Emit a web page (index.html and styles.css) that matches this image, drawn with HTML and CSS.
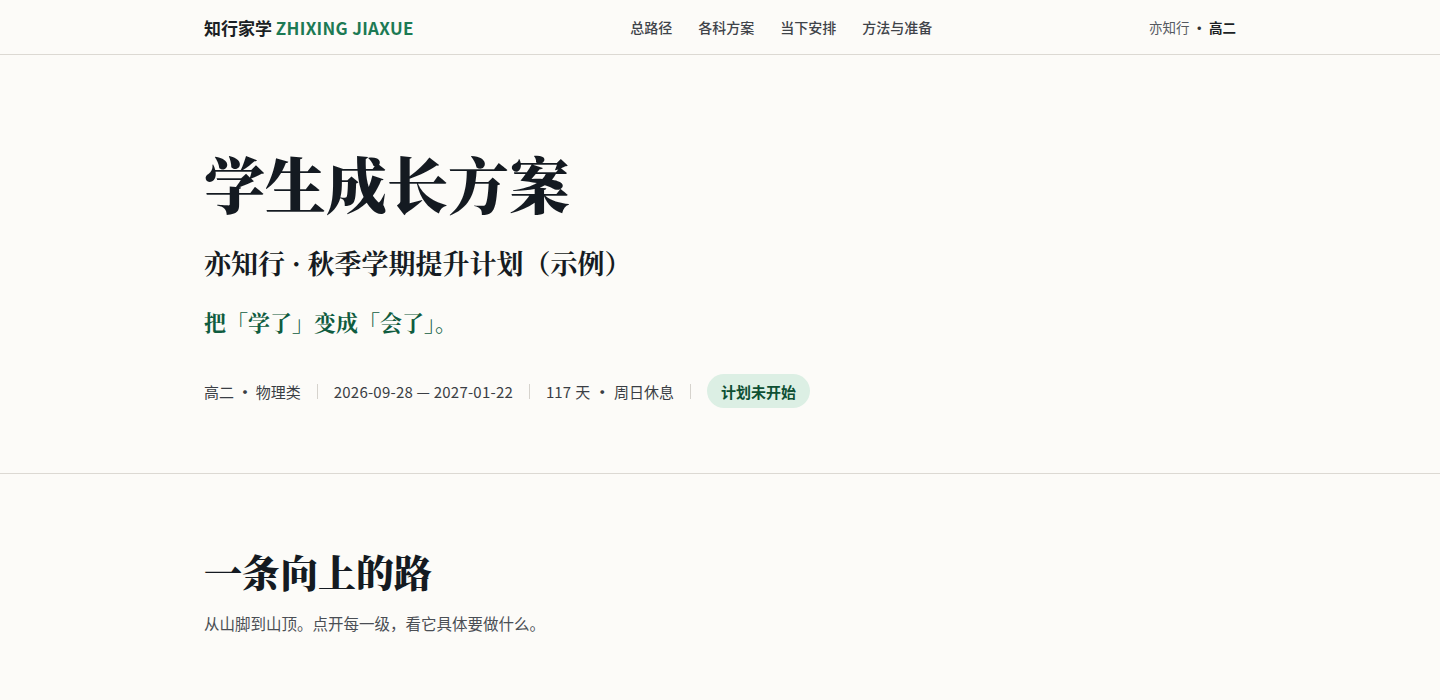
FILE: index.html
```html
<!DOCTYPE html>
<html lang="zh-CN">
<head>
<meta charset="utf-8">
<title>学生成长方案</title>
<link rel="stylesheet" href="styles.css">
</head>
<body>
<header class="topbar">
  <div class="wrap topbar-inner">
    <div class="logo"><span class="logo-cn">知行家学</span> <span class="logo-en">ZHIXING JIAXUE</span></div>
    <nav class="nav">
      <a href="#">总路径</a>
      <a href="#">各科方案</a>
      <a href="#">当下安排</a>
      <a href="#">方法与准备</a>
    </nav>
    <div class="user"><span class="user-name">亦知行</span><span class="dot">·</span><span class="user-grade">高二</span></div>
  </div>
</header>
<section class="hero">
  <div class="wrap">
    <h1 class="hero-title">学生成长方案</h1>
    <h2 class="hero-sub">亦知行 · 秋季学期提升计划（示例）</h2>
    <p class="hero-tag">把「学了」变成「会了」。</p>
    <div class="meta">
      <span class="meta-item">高二 <span class="mdot">·</span> 物理类</span>
      <span class="sep"></span>
      <span class="meta-item meta-date">2026-09-28 — 2027-01-22</span>
      <span class="sep"></span>
      <span class="meta-item meta-days">117 天 <span class="mdot">·</span> 周日休息</span>
      <span class="sep"></span>
      <span class="badge">计划未开始</span>
    </div>
  </div>
</section>
<section class="path">
  <div class="wrap">
    <h2 class="sec-title">一条向上的路</h2>
    <p class="sec-sub">从山脚到山顶。点开每一级，看它具体要做什么。</p>
  </div>
</section>
</body>
</html>
```
FILE: styles.css
```css
* { box-sizing: border-box; }
html, body { margin: 0; padding: 0; }
body {
  background: #fcfbf8;
  color: #161b22;
  font-family: "Noto Sans CJK SC", "Noto Sans", sans-serif;
}
.wrap {
  max-width: 1032px;
  margin: 0 auto;
}
.topbar {
  height: 55px;
  border-bottom: 1px solid #dcd9d3;
}
.topbar-inner {
  height: 54px;
  display: flex;
  align-items: center;
  justify-content: space-between;
}
.logo {
  font-size: 17px;
  font-weight: 700;
  white-space: nowrap;
}
.logo-cn { color: #1b1f24; }
.logo-en { color: #1c7a54; letter-spacing: 0.3px; }
.nav {
  display: flex;
  gap: 26px;
}
.nav a {
  font-size: 14px;
  color: #3f4349;
  text-decoration: none;
  font-weight: 500;
}
.user {
  font-size: 13.5px;
  color: #55595f;
  display: flex;
  align-items: center;
}
.user .dot { margin: 0 3px; color: #333; font-weight: 700; }
.user-grade { font-weight: 700; color: #1b1f24; }

.hero {
  padding: 92px 0 65px;
  border-bottom: 1px solid #dcd9d3;
}
.hero-title, .hero-sub, .hero-tag, .sec-title {
  font-family: "Noto Serif CJK SC", "Noto Serif", "Noto Sans CJK SC", serif;
}
.hero-title {
  margin: 0;
  font-size: 61px;
  line-height: 72px;
  font-weight: 900;
  color: #141a21;
}
.hero-sub {
  margin: 26px 0 0;
  font-size: 27px;
  line-height: 36px;
  font-weight: 700;
  color: #161b22;
}
.hero-tag {
  margin: 26px 0 0;
  font-size: 22px;
  line-height: 30px;
  font-weight: 700;
  color: #0f5c3f;
}
.meta {
  margin-top: 37px;
  display: flex;
  align-items: center;
  gap: 16px;
  font-size: 15px;
  color: #3a3e44;
}
.meta-date { letter-spacing: 0.22px; }
.meta-days { word-spacing: 1px; }
.mdot { margin: 0; font-weight: 700; }
.sep {
  width: 1px;
  height: 15px;
  background: #d6d3cd;
}
.badge {
  display: inline-flex;
  align-items: center;
  height: 34px;
  padding: 0 14px;
  border-radius: 17px;
  background: #dcefe4;
  color: #0e4f33;
  font-weight: 700;
  font-size: 15px;
}
.path {
  padding: 73px 0 40px;
}
.sec-title {
  margin: 0;
  font-size: 38px;
  line-height: 48px;
  font-weight: 900;
  color: #141a21;
}
.sec-sub {
  margin: 17px 0 0;
  font-size: 15.5px;
  line-height: 22px;
  color: #4a4e54;
}
```
